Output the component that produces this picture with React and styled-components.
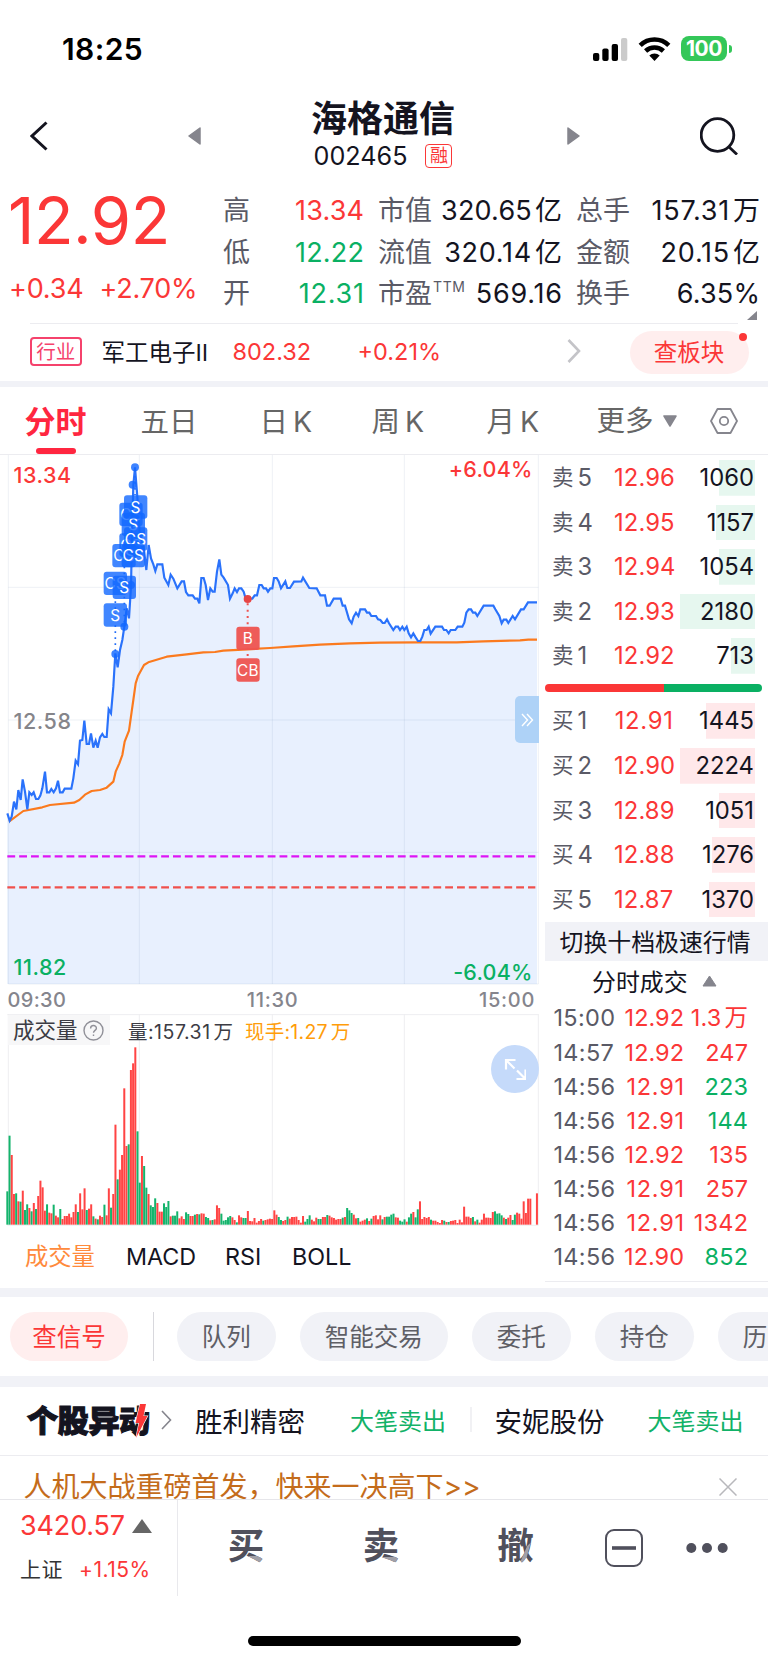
import React from 'react';
import styled, { createGlobalStyle, css } from 'styled-components';

const RED = '#fb3737';
const GREEN = '#0ab063';
const INK = '#14141f';
const GRAY = '#5a5a66';
const BAND = '#f1f2f7';

const Global = createGlobalStyle`
  * { box-sizing: border-box; }
  body {
    margin: 0;
    background: #fff;
    color: ${INK};
    font-family: Inter, 'Noto Sans CJK SC', sans-serif;
    -webkit-font-smoothing: antialiased;
  }
`;

const Page = styled.div`
  width: 768px;
  height: 1663px;
  overflow: hidden;
  display: flex;
  flex-direction: column;
  background: #fff;
  white-space: nowrap;
`;

const Band = styled.div`
  flex: none;
  height: ${(p) => p.$h}px;
  background: ${BAND};
`;

/* ---------- status bar ---------- */
const StatusBar = styled.div`
  flex: none;
  height: 96px;
  padding: 35px 36px 0 62px;
  display: flex;
  justify-content: space-between;
`;
const Clock = styled.div`
  height: 27px;
  line-height: 28px;
  font-size: 30px;
  font-weight: 600;
  color: #000;
  letter-spacing: 0.4px;
`;
const StatusIcons = styled.div`
  display: flex;
  align-items: center;
  height: 27px;
  gap: 10px;
`;
const Battery = styled.div`
  position: relative;
  width: 46px;
  height: 25px;
  margin-right: 5px;
  border-radius: 8px;
  background: #34c759;
  color: #fff;
  font-size: 21px;
  font-weight: 700;
  line-height: 25px;
  text-align: center;
  letter-spacing: -0.4px;
  &::after {
    content: '';
    position: absolute;
    left: 47.5px;
    top: 8.5px;
    width: 3px;
    height: 8px;
    border-radius: 0 3px 3px 0;
    background: #34c759;
  }
`;

/* ---------- header ---------- */
const Header = styled.div`
  flex: none;
  height: 88px;
  padding-left: 30px;
  display: grid;
  grid-template-columns: 158px 13px 366px 13px 120px 38px;
  align-items: center;
  > svg { display: block; margin-top: -8px; }
`;
const TitleBlock = styled.div`
  height: 88px;
  padding: 5px 2px 0 0;
  display: flex;
  flex-direction: column;
  align-items: center;
`;
const Title = styled.div`
  height: 37px;
  line-height: 37px;
  font-size: 36px;
  font-weight: 700;
`;
const CodeRow = styled.div`
  height: 36px;
  display: flex;
  align-items: center;
  gap: 18px;
  font-size: 25.2px;
  line-height: 36px;
`;
const MarginBadge = styled.span`
  width: 27px;
  height: 24px;
  border: 1.5px solid ${RED};
  border-radius: 4px;
  color: ${RED};
  font-size: 18px;
  line-height: 21px;
  text-align: center;
`;

/* ---------- quote ---------- */
const Quote = styled.div`
  flex: none;
  height: 139px;
  padding-left: 10px;
  display: flex;
`;
const PriceBlock = styled.div`
  width: 213px;
  color: ${RED};
`;
const BigPrice = styled.div`
  height: 73px;
  line-height: 74px;
  font-size: 65px;
  margin-left: -2px;
  letter-spacing: -0.5px;
`;
const Changes = styled.div`
  height: 62px;
  line-height: 64px;
  font-size: 27px;
  display: flex;
  gap: 16px;
  margin-left: -1px;
  letter-spacing: -0.2px;
`;
const Stats = styled.div`
  position: relative;
  padding-top: 6px;
  display: grid;
  grid-template-columns: 55px 86px 14px 70px 114px 14px 60px 124px;
  grid-auto-rows: 41.5px;
  line-height: 41.5px;
  font-size: 27px;
`;
const StatLabel = styled.span`
  color: ${GRAY};
  sup { position: absolute; font-size: 14px; line-height: 14px; margin: 7px 0 0 1px; letter-spacing: 0.6px; }
`;
const StatValue = styled.span`
  color: ${(p) => p.$c || INK};
  display: flex;
  justify-content: flex-end;
  gap: 3px;
  letter-spacing: ${(p) => p.$ls}px;
  margin-right: -${(p) => p.$ls}px;
`;
const Corner = styled.i`
  position: absolute;
  left: 524px;
  top: 127px;
  border-left: 10px solid transparent;
  border-bottom: 9px solid #85858d;
`;

/* ---------- industry ---------- */
const Industry = styled.div`
  flex: none;
  height: 57.5px;
  margin: 0 30px;
  border-top: 1px solid #ececf0;
  display: flex;
  align-items: center;
  font-size: 23.5px;
  padding-bottom: 2px;
  > * { flex: none; }
`;
const IndustryBadge = styled.span`
  width: 51.5px;
  height: 29.5px;
  border: 2px solid #f5426c;
  border-radius: 4px;
  color: #f5426c;
  font-size: 19.5px;
  line-height: 26px;
  text-align: center;
`;
const Cell = styled.span`
  width: ${(p) => p.$w}px;
  color: ${(p) => p.$c || 'inherit'};
  flex: none;
`;
const SectorPill = styled.span`
  position: relative;
  width: 119px;
  height: 43.5px;
  margin: 2px 0 0 48.5px;
  border-radius: 22px;
  background: #ffeeee;
  color: ${RED};
  line-height: 43px;
  text-align: center;
  &::after {
    content: '';
    position: absolute;
    right: 2px;
    top: 2px;
    width: 8px;
    height: 8px;
    border-radius: 50%;
    background: ${RED};
  }
`;

/* ---------- period tabs ---------- */
const Tabs = styled.div`
  flex: none;
  height: 68px;
  padding-left: 24.5px;
  display: flex;
  font-size: 28.5px;
  line-height: 70px;
  color: #666;
  border-bottom: 1px solid #ececf0;
`;
const Tab = styled.div`
  position: relative;
  flex: none;
  width: ${(p) => p.$w}px;
  word-spacing: -3px;
  ${(p) => p.$active && css`
    color: #ff2640;
    font-weight: 700;
    font-size: 31px;
    &::after {
      content: '';
      position: absolute;
      left: 11px;
      bottom: 0;
      width: 40px;
      height: 6px;
      border-radius: 3px;
      background: #ff2640;
    }
  `}
`;
const More = styled(Tab)`
  display: flex;
  align-items: center;
  gap: 9px;
`;

/* ---------- main ---------- */
const Main = styled.div`
  flex: none;
  height: 833px;
  display: flex;
`;
const Charts = styled.div`
  width: 545px;
  display: flex;
  flex-direction: column;
`;
const PriceChart = styled.div`
  position: relative;
  height: 530px;
  svg { display: block; }
`;
const ChartLabel = styled.span`
  position: absolute;
  font-size: 21.5px;
  font-weight: 500;
  line-height: 24px;
  letter-spacing: ${(p) => (p.$right ? 0.2 : 0.55)}px;
  color: ${(p) => p.$c};
  top: ${(p) => p.$top}px;
  ${(p) => (p.$right ? 'right: 12.5px;' : 'left: 13.5px;')}
`;
const SideTab = styled.div`
  position: absolute;
  left: 515px;
  top: 241px;
  width: 24px;
  height: 47px;
  border-radius: 5px 0 0 5px;
  background: #aed2f7;
  display: flex;
  align-items: center;
  justify-content: center;
`;
const TimeAxis = styled.div`
  height: 29px;
  padding: 0 10px 0 7.5px;
  display: flex;
  justify-content: space-between;
  font-size: 20px;
  font-weight: 500;
  line-height: 31px;
  color: #85858d;
  letter-spacing: 0.35px;
  span + span { letter-spacing: 0.7px; }
`;
const VolumeChart = styled.div`
  position: relative;
  height: 212px;
  svg { display: block; }
`;
const VolumeHead = styled.div`
  position: absolute;
  left: 8px;
  top: 1px;
  height: 30px;
  display: flex;
  font-size: 19.5px;
  line-height: 35px;
  color: #3c3c44;
`;
const VolumeFigure = styled.span`
  width: ${(p) => p.$w}px;
  color: ${(p) => p.$c || 'inherit'};
  display: flex;
  gap: 3px;
  letter-spacing: ${(p) => p.$ls}px;
`;
const VolumeName = styled.div`
  width: 102px;
  padding-left: 5px;
  background: #f7f7f8;
  font-size: 21.5px;
  line-height: 30px;
  display: flex;
  align-items: center;
  gap: 5px;
`;
const Expand = styled.div`
  position: absolute;
  left: 491px;
  top: 31px;
  width: 48px;
  height: 48px;
  border-radius: 50%;
  background: #c5dafa;
  padding: 13px;
`;
const Indicators = styled.div`
  display: flex;
  padding-left: 25px;
  height: 62px;
  line-height: 62px;
  font-size: 23.3px;
`;

/* ---------- order book ---------- */
const Side = styled.div`
  width: 223px;
`;
const BookRow = styled.div`
  height: 44.6px;
  line-height: 45.6px;
  padding-left: 7px;
  display: grid;
  grid-template-columns: 62px 59px 7px 75px;
  align-items: center;
  font-size: 23.8px;
`;
const Level = styled.span`
  color: ${GRAY};
  display: flex;
  gap: 4px;
  b { font-weight: 400; font-size: 21.5px; }
`;
const BookPrice = styled.span`
  color: ${RED};
  text-align: right;
  letter-spacing: ${(p) => p.$ls}px;
  margin-right: -${(p) => p.$ls}px;
`;
const Depth = styled.span`
  grid-column: 4;
  height: 35.5px;
  line-height: 36.5px;
  padding-right: 1px;
  text-align: right;
  background: linear-gradient(${(p) => p.$c}, ${(p) => p.$c}) right / ${(p) => p.$w}px 100% no-repeat;
`;
const Ratio = styled.div`
  height: 20.4px;
  padding: 6px 6px 6px 0;
  display: flex;
  &::before, &::after { content: ''; height: 8px; }
  &::before { width: 118.5px; background: ${RED}; border-radius: 4px 0 0 4px; }
  &::after { flex: 1; background: ${GREEN}; border-radius: 0 4px 4px 0; }
`;
const Switch = styled.div`
  height: 39.5px;
  line-height: 41px;
  margin-top: 0.6px;
  padding-left: 14.5px;
  background: ${BAND};
  font-size: 23.9px;
`;
const TradesTitle = styled.div`
  height: 38.5px;
  padding-left: 47px;
  margin-bottom: 1.5px;
  display: flex;
  align-items: center;
  gap: 14.5px;
  font-size: 23.9px;
`;
const Trade = styled.div`
  height: 34.15px;
  line-height: 34.15px;
  padding-left: 8.5px;
  display: grid;
  grid-template-columns: 62px 68.5px 64px;
  font-size: 23.5px;
  color: ${GRAY};
  letter-spacing: 0.3px;
`;
const TradeFigure = styled.span`
  display: flex;
  justify-content: flex-end;
  gap: 3px;
  color: ${(p) => p.$c};
  letter-spacing: ${(p) => p.$ls}px;
  margin-right: -${(p) => p.$ls}px;
`;
const SideEnd = styled.div`
  margin-top: 6px;
  border-top: 1px solid #ececf0;
`;

/* ---------- chips ---------- */
const Chips = styled.div`
  flex: none;
  height: 79px;
  padding-left: 10px;
  display: flex;
  align-items: center;
  gap: 24.5px;
  overflow: hidden;
`;
const Chip = styled.div`
  flex: none;
  height: 49px;
  line-height: 50px;
  padding: 0 ${(p) => (p.$hot ? 22.25 : 24.75)}px;
  border-radius: 25px;
  font-size: 24.5px;
  color: ${(p) => (p.$hot ? RED : '#5f5f66')};
  background: ${(p) => (p.$hot ? '#ffeeee' : BAND)};
`;
const Rule = styled.i`
  flex: none;
  width: 1.5px;
  height: ${(p) => p.$h}px;
  background: ${(p) => p.$c};
  margin-right: ${(p) => p.$mr}px;
`;

/* ---------- movers ---------- */
const Movers = styled.div`
  flex: none;
  height: 69px;
  padding: 0 0 3px 27px;
  display: flex;
  align-items: center;
  border-bottom: 1px solid #ececf0;
  font-size: 27.5px;
`;
const Logo = styled.div`
  position: relative;
  width: 134px;
  font-size: 31px;
  font-weight: 900;
  line-height: 40px;
  padding-top: 2px;
  -webkit-text-stroke: 1.2px ${INK};
  letter-spacing: -0.3px;
  svg { position: absolute; left: 108px; top: 4px; overflow: visible; }
`;
const Event = styled.span`
  width: ${(p) => p.$w}px;
  font-size: 24px;
  color: #12b268;
`;

/* ---------- notice ---------- */
const Notice = styled.div`
  flex: none;
  height: 42.5px;
  padding: 0 31px 0 23.5px;
  display: flex;
  justify-content: space-between;
  align-items: flex-start;
  overflow: hidden;
  font-size: 28px;
  line-height: 62px;
  color: #c46c1b;
  svg { margin-top: 22px; }
`;

/* ---------- bottom ---------- */
const Bottom = styled.div`
  flex: none;
  height: 97px;
  border-top: 1px solid #e6e6ea;
  display: flex;
`;
const IndexBox = styled.div`
  width: 178px;
  padding: 6px 0 0 20px;
  border-right: 1px solid #e9e9ed;
  color: ${RED};
`;
const IndexRow = styled.div`
  display: flex;
  align-items: center;
  height: ${(p) => p.$h}px;
  line-height: ${(p) => p.$h}px;
  font-size: ${(p) => p.$fs}px;
  gap: ${(p) => p.$gap}px;
  letter-spacing: ${(p) => p.$ls}px;
`;
const Action = styled.div`
  width: ${(p) => p.$w}px;
  display: flex;
  align-items: center;
  justify-content: center;
`;
const Glyph = styled.span`
  position: relative;
  font-size: 36.5px;
  font-weight: 700;
  line-height: 44px;
  margin-top: -3px;
  color: #50505c;
  &::after {
    content: '${(p) => p.$t}';
    position: absolute;
    left: 0;
    top: 0;
    color: #a0a0a8;
    clip-path: polygon(${(p) => p.$clip});
  }
`;
const HomeArea = styled.div`
  flex: 1;
  display: flex;
  justify-content: center;
  padding-top: 40.5px;
  &::after {
    content: '';
    width: 273px;
    height: 10px;
    border-radius: 5px;
    background: #000;
  }
`;

/* ---------- data (chart coordinates are in thirds of a pixel) ---------- */
const PRICE =
  '22,1090 29,1112 35,1100 42,1055 49,1078 55,1020 62,1050 68,988 75,1025 82,1078 88,1027 95,1035 101,1027 108,1047 115,1047 121,1037 127,1015 135,965 141,1027 148,1027 154,1017 161,1027 168,1015 174,992 180,1027 188,1027 194,1016 214,1016 220,985 227,932 234,943 240,872 247,870 253,812 260,882 267,882 273,850 280,893 287,872 293,893 300,862 307,852 313,861 320,861 326,778 333,790 340,710 346,610 353,652 360,600 367,570 373,530 380,475 387,505 393,410 396,250 400,105 405,52 412,140 420,260 432,300 439,360 446,285 453,325 460,343 466,363 472,343 487,343 493,383 505,405 512,374 520,386 532,415 545,394 552,394 558,426 565,436 578,436 585,446 592,446 598,460 604,384 611,384 617,405 624,450 631,415 638,425 644,425 651,365 658,328 664,374 671,383 684,405 690,446 698,430 704,415 711,426 717,415 724,415 731,425 737,446 757,446 764,436 771,436 778,405 785,405 791,415 798,415 804,425 811,415 817,415 822,384 830,384 836,394 843,415 856,394 862,414 870,414 882,395 904,394 909,383 928,414 950,415 961,436 975,436 981,467 989,467 1001,446 1022,446 1028,467 1035,467 1047,508 1055,520 1061,500 1068,488 1075,498 1081,478 1095,478 1101,488 1108,488 1114,498 1128,498 1134,508 1141,510 1148,519 1154,519 1161,508 1167,520 1180,540 1187,530 1194,530 1200,540 1207,530 1213,540 1220,530 1226,550 1233,562 1240,550 1247,562 1254,573 1261,573 1267,560 1273,540 1280,540 1286,530 1292,551 1306,530 1326,530 1332,540 1339,540 1346,550 1352,540 1366,540 1373,530 1387,530 1393,518 1399,488 1406,478 1413,478 1419,488 1426,488 1432,498 1451,467 1480,467 1486,478 1498,498 1505,520 1511,509 1519,509 1525,519 1538,498 1545,508 1563,478 1571,478 1584,457 1611,457';

const AVERAGE =
  '27,1115 70,1083 127,1072 150,1065 222,1058 238,1050 255,1034 275,1023 300,1020 320,1013 340,995 347,965 358,940 367,915 374,875 387,842 395,785 400,750 407,700 414,678 432,645 445,637 500,620 560,613 610,607 645,606 670,602 743,598 810,594 880,589 960,584 1050,580 1140,578 1250,577 1370,577 1450,574 1560,571 1585,569 1611,569';

const VOLUME = (
  'g100 g267 r209 r92 g94 r70 g69 r102 g44 g61 r50 g40 r65 g47 r86 r132 r112 r42 g61 r36 r34 g60 r27 r22 g47 r17 r26 r26 r33 r22 ' +
  'r38 r61 g38 r94 r46 r109 g44 r48 r61 g25 r18 g16 r27 r23 g60 r28 r109 g51 r92 r300 g136 r165 r209 r409 r236 g241 r464 r484 r532 g280 ' +
  'g126 r206 g176 g111 r92 g58 g53 g79 r65 r39 r39 g64 g53 g71 r25 g27 g27 g40 r19 r25 r17 g37 g32 r26 r26 g30 r32 g31 r34 r33 ' +
  'g23 g20 r13 g14 r16 r58 r50 g33 g12 g14 g22 g26 r22 r14 g7 r28 r22 g20 g20 r41 r11 r10 r20 r6 r11 r17 g12 r14 r16 r18 ' +
  'r17 r43 r30 g23 g14 r11 r14 g24 r18 r23 r23 r24 r14 r6 r26 g9 g17 g28 r15 r10 r21 g17 g17 r23 r23 g29 r27 r22 r20 r15 ' +
  'r17 r17 g21 r23 g50 g43 g35 r30 r19 g20 r9 r12 r15 g19 r11 g18 r26 r28 r16 r28 g16 r23 g24 g24 g30 g33 r22 r21 g12 g9 ' +
  'g16 r9 g22 g33 r38 g22 g46 r70 r17 r23 r20 r23 g15 r12 r12 r8 r5 r14 g12 r8 g8 r11 r12 r14 r5 r15 r7 r54 r24 r24 ' +
  'r20 g23 r10 g15 r6 r15 r33 r21 r21 r20 r38 g40 g33 g34 g28 r21 g17 r21 r29 g14 g30 r36 r33 r18 r70 r35 r78 r78 r0 r0 r94'
).split(' ').map((v) => ({ up: v[0] === 'r', h: Number(v.slice(1)) }));

const FLAGS = [
  ['CS', 358, 158], ['S', 365, 188], ['S', 372, 136], ['CS', 358, 250], ['CS', 372, 232],
  ['CS', 337, 282], ['CS', 365, 282], ['CS', 311, 365], ['S', 338, 377], ['S', 311, 460],
  ['B', 709, 530], ['CB', 709, 625],
];
const GRID_X = [25, 418, 817, 1213, 1615];

const SELLS = [['5', '12.96', '1060', 36], ['4', '12.95', '1157', 39.5], ['3', '12.94', '1054', 36], ['2', '12.93', '2180', 75], ['1', '12.92', '713', 24.5]];
const BUYS = [['1', '12.91', '1445', 49], ['2', '12.90', '2224', 75], ['3', '12.89', '1051', 36], ['4', '12.88', '1276', 43], ['5', '12.87', '1370', 46]];
const TRADES = [
  ['15:00', '12.92', '1.3', 1, '万'], ['14:57', '12.92', '247', 1], ['14:56', '12.91', '223', 0], ['14:56', '12.91', '144', 0],
  ['14:56', '12.92', '135', 1], ['14:56', '12.91', '257', 1], ['14:56', '12.91', '1342', 1], ['14:56', '12.90', '852', 0],
];

/* Digits after the point that include a narrow "1" get looser tracking. */
const tracking = (value, tight, loose) => (/\..*1/.test(value) ? loose : tight);

function Stat({ label, sup, value, unit, color }) {
  return (
    <>
      <StatLabel>{label}{sup && <sup>{sup}</sup>}</StatLabel>
      <StatValue $c={color} $ls={tracking(value, 0.2, 0.75)}>
        <span>{value}</span>{unit && <span>{unit}</span>}
      </StatValue>
    </>
  );
}

function Flag({ text, x, y }) {
  const buy = text.includes('B');
  return (
    <g>
      <rect x={x} y={y} width="70" height="70" rx="9" fill={buy ? '#ee5350' : '#1268ff'} fillOpacity={buy ? 0.95 : 0.8} />
      <text x={x + 35} y={y + 52} textAnchor="middle" fontSize="46" fill="#fff" letterSpacing="1">{text}</text>
    </g>
  );
}

function PriceSvg() {
  return (
    <svg width="540" height="530" viewBox="0 15 1620 1590">
      <polygon points={`${PRICE} 1611,1602 22,1602`} fill="#e8f0fe" />
      <g stroke="#2b4a80" strokeOpacity="0.08" strokeWidth="3">
        {GRID_X.map((x) => <line key={x} x1={x} x2={x} y1="15" y2="1602" />)}
        {[412, 810, 1207, 1602].map((y) => <line key={y} x1="25" x2="1615" y1={y} y2={y} />)}
      </g>
      <g strokeWidth="7" strokeDasharray="23.5 12">
        <line x1="22" x2="1606" y1="1219" y2="1219" stroke="#dd14f5" />
        <line x1="22" x2="1606" y1="1312" y2="1312" stroke="#f0504c" />
      </g>
      <polyline points={AVERAGE} fill="none" stroke="#fb7a1e" strokeWidth="6.5" strokeLinejoin="round" />
      <polyline points={PRICE} fill="none" stroke="#2a72fb" strokeWidth="6.5" />
      <g strokeWidth="5" strokeDasharray="5 13" stroke="#1f6bf8">
        <line x1="346" x2="346" y1="454" y2="610" />
        <line x1="373" x2="373" y1="350" y2="525" />
        <line x1="405" x2="405" y1="60" y2="135" />
      </g>
      <line x1="743" x2="743" y1="460" y2="625" stroke="#ee5350" strokeWidth="6" strokeDasharray="6 13" />
      {[[405, 52], [398, 104], [393, 405], [373, 530], [346, 612]].map(([x, y]) => (
        <circle key={y} cx={x} cy={y} r="12" fill="#1268ff" fillOpacity="0.82" />
      ))}
      <circle cx="743" cy="447" r="12" fill="#e64545" />
      {FLAGS.map(([t, x, y]) => <Flag key={`${x}-${y}`} text={t} x={x} y={y} />)}
    </svg>
  );
}

function VolumeSvg() {
  return (
    <svg width="540" height="212" viewBox="0 0 1620 636">
      <g stroke="#eeeef1" strokeWidth="3">
        {GRID_X.map((x) => <line key={x} x1={x} x2={x} y1="0" y2="634" />)}
        <line x1="22" x2="1615" y1="2" y2="2" />
        <line x1="22" x2="1615" y1="634" y2="634" />
      </g>
      {VOLUME.map((b, i) => (
        <rect key={i} x={19 + i * 6.62} y={632 - b.h} width="6" height={b.h} fill={b.up ? '#ff4444' : '#14b46c'} />
      ))}
    </svg>
  );
}

function Book({ side, rows, tint }) {
  return rows.map(([n, price, vol, w]) => (
    <BookRow key={n}>
      <Level><b>{side}</b>{n}</Level>
      <BookPrice $ls={tracking(price, 0.1, 0.75)}>{price}</BookPrice>
      <Depth $w={w} $c={tint}>{vol}</Depth>
    </BookRow>
  ));
}

export default function App() {
  return (
    <Page>
      <Global />
      <StatusBar>
        <Clock>18:25</Clock>
        <StatusIcons>
          <svg width="35" height="24" viewBox="0 0 35 24">
            <rect x="0" y="16" width="6.3" height="8" rx="2" />
            <rect x="9.3" y="11.5" width="6.3" height="12.5" rx="2" />
            <rect x="18.7" y="7" width="6.3" height="17" rx="2" />
            <rect x="28" y="1" width="6.3" height="23" rx="2" fill="#cbcbcb" />
          </svg>
          <svg width="33" height="24" viewBox="0 0 33 24">
            <g fill="none" stroke="#000" strokeWidth="4.6">
              <path d="M2.2 8.3 A20.5 20.5 0 0 1 30.8 8.3" />
              <path d="M7.6 14 A13 13 0 0 1 25.4 14" />
            </g>
            <path d="M16.5 24 L11.3 18.6 A7.6 7.6 0 0 1 21.7 18.6 Z" />
          </svg>
          <Battery>100</Battery>
        </StatusIcons>
      </StatusBar>

      <Header>
        <svg width="18" height="30" viewBox="0 0 18 30"><path d="M16.5 1.5 L2 15 L16.5 28.5" fill="none" stroke={INK} strokeWidth="3" /></svg>
        <svg width="13" height="18" viewBox="0 0 13 18"><path d="M12 1 V17 L1 9 Z" fill="#85858d" stroke="#85858d" strokeLinejoin="round" strokeWidth="1.5" /></svg>
        <TitleBlock>
          <Title>海格通信</Title>
          <CodeRow>002465<MarginBadge>融</MarginBadge></CodeRow>
        </TitleBlock>
        <svg width="13" height="18" viewBox="0 0 13 18"><path d="M1 1 V17 L12 9 Z" fill="#85858d" stroke="#85858d" strokeLinejoin="round" strokeWidth="1.5" /></svg>
        <i />
        <svg width="38" height="38" viewBox="0 0 38 38" fill="none" stroke={INK} strokeWidth="2.8">
          <circle cx="17.5" cy="18" r="16.3" /><path d="M28.5 29.5 L37 37.5" />
        </svg>
      </Header>

      <Quote>
        <PriceBlock>
          <BigPrice>12.92</BigPrice>
          <Changes><span>+0.34</span><span>+2.70%</span></Changes>
        </PriceBlock>
        <Stats>
          <Stat label="高" value="13.34" color={RED} /><i />
          <Stat label="市值" value="320.65" unit="亿" /><i />
          <Stat label="总手" value="157.31" unit="万" />
          <Stat label="低" value="12.22" color={GREEN} /><i />
          <Stat label="流值" value="320.14" unit="亿" /><i />
          <Stat label="金额" value="20.15" unit="亿" />
          <Stat label="开" value="12.31" color={GREEN} /><i />
          <Stat label="市盈" sup="TTM" value="569.16" /><i />
          <Stat label="换手" value="6.35%" />
          <Corner />
        </Stats>
      </Quote>

      <Industry>
        <IndustryBadge>行业</IndustryBadge>
        <Cell $w={20} />
        <Cell $w={131}>军工电子Ⅱ</Cell>
        <Cell $w={125} $c={RED}>802.32</Cell>
        <Cell $w={209.5} $c={RED}>+0.21%</Cell>
        <svg width="14" height="24" viewBox="0 0 14 24"><path d="M1.5 1 L12 12 L1.5 23" fill="none" stroke="#c4c4c8" strokeWidth="2.6" /></svg>
        <SectorPill>查板块</SectorPill>
      </Industry>
      <Band $h={6.5} />

      <Tabs>
        <Tab $active $w={116}>分时</Tab>
        <Tab $w={119}>五日</Tab>
        <Tab $w={112}>日 K</Tab>
        <Tab $w={115}>周 K</Tab>
        <Tab $w={110}>月 K</Tab>
        <More $w={113}>更多<svg width="14" height="12" viewBox="0 0 14 12"><path d="M1 1 H13 L7 11 Z" fill="#85858d" stroke="#85858d" strokeLinejoin="round" strokeWidth="1.5" /></svg></More>
        <More $w={30}>
          <svg width="28" height="26" viewBox="0 0 28 26" fill="none" stroke="#85858d" strokeWidth="1.8">
            <path d="M7.5 1 H20.5 L27 13 L20.5 25 H7.5 L1 13 Z" strokeLinejoin="round" /><circle cx="14" cy="13" r="4.2" />
          </svg>
        </More>
      </Tabs>

      <Main>
        <Charts>
          <PriceChart>
            <PriceSvg />
            <ChartLabel $c={RED} $top={7.5}>13.34</ChartLabel>
            <ChartLabel $c={RED} $top={1.5} $right>+6.04%</ChartLabel>
            <ChartLabel $c="#85858a" $top={253.5}>12.58</ChartLabel>
            <ChartLabel $c={GREEN} $top={499.5}>11.82</ChartLabel>
            <ChartLabel $c={GREEN} $top={505} $right>-6.04%</ChartLabel>
            <SideTab>
              <svg width="13" height="14" viewBox="0 0 13 14" fill="none" stroke="#fff" strokeWidth="1.4"><path d="M1 1 L6.5 7 L1 13 M6 1 L11.5 7 L6 13" /></svg>
            </SideTab>
          </PriceChart>
          <TimeAxis><span>09:30</span><span>11:30</span><span>15:00</span></TimeAxis>
          <VolumeChart>
            <VolumeSvg />
            <VolumeHead>
              <VolumeName>成交量
                <svg width="21" height="21" viewBox="0 0 21 21" fill="none" stroke="#909098" strokeWidth="1.4">
                  <circle cx="10.5" cy="10.5" r="9.5" />
                  <path d="M7.6 8.4 C7.6 4.6 13.4 4.6 13.4 8.2 C13.4 10.4 10.5 10.4 10.5 12.8 M10.5 14.4 V16" />
                </svg>
              </VolumeName>
              <Cell $w={18} />
              <VolumeFigure $w={117} $ls={0.5}><span>量:157.31</span><span>万</span></VolumeFigure>
              <VolumeFigure $w={110} $ls={0.25} $c="#ff9d0a"><span>现手:1.27</span><span>万</span></VolumeFigure>
            </VolumeHead>
            <Expand>
              <svg width="22" height="22" viewBox="0 0 22 22" fill="none" stroke="#fff" strokeWidth="2.2">
                <path d="M11.5 2 H2 V11.5 M2 2 L10.5 10.5 M12.5 21 H21.5 V11.5 M21.5 21 L13 12.5" />
              </svg>
            </Expand>
          </VolumeChart>
          <Indicators>
            <Cell $w={101} $c="#ff8a3c">成交量</Cell>
            <Cell $w={99}>MACD</Cell>
            <Cell $w={67}>RSI</Cell>
            <Cell $w={80}>BOLL</Cell>
          </Indicators>
        </Charts>
        <Side>
          <Book side="卖" rows={SELLS} tint="#e6f7ef" />
          <Ratio />
          <Book side="买" rows={BUYS} tint="#ffe8ea" />
          <Switch>切换十档极速行情</Switch>
          <TradesTitle>分时成交<svg width="15" height="12" viewBox="0 0 15 12"><path d="M1 11 H14 L7.5 1 Z" fill="#85858d" stroke="#85858d" strokeLinejoin="round" /></svg></TradesTitle>
          {TRADES.map(([t, p, v, up, unit], i) => (
            <Trade key={i}>
              <span>{t}</span>
              <TradeFigure $c={RED} $ls={tracking(p, 0, 0.7)}>{p}</TradeFigure>
              <TradeFigure $c={up ? RED : GREEN} $ls={0.2}><span>{v}</span>{unit && <span>{unit}</span>}</TradeFigure>
            </Trade>
          ))}
          <SideEnd />
        </Side>
      </Main>
      <Band $h={9} />

      <Chips>
        <Chip $hot>查信号</Chip>
        <Rule $h={49} $c="#d8d8dd" $mr={-1.5} />
        <Chip>队列</Chip>
        <Chip>智能交易</Chip>
        <Chip>委托</Chip>
        <Chip>持仓</Chip>
        <Chip>历史</Chip>
      </Chips>
      <Band $h={11} />

      <Movers>
        <Logo>
          个股异动
          <svg width="13" height="36" viewBox="0 0 13 36"><path d="M5 1 H11 L8.5 13 H12.5 L1 35 L4 20 H0.5 Z" fill={RED} stroke="#fff" strokeWidth="1.2" paintOrder="stroke" /></svg>
        </Logo>
        <Cell $w={34}>
          <svg width="11" height="20" viewBox="0 0 11 20"><path d="M1 1 L9.5 10 L1 19" fill="none" stroke="#85858d" strokeWidth="1.6" /></svg>
        </Cell>
        <Cell $w={155}>胜利精密</Cell>
        <Event $w={120}>大笔卖出</Event>
        <Rule $h={25} $c="#f1f1f4" $mr={23} />
        <Cell $w={153}>安妮股份</Cell>
        <Event $w={100}>大笔卖出</Event>
      </Movers>

      <Notice>
        人机大战重磅首发，快来一决高下&gt;&gt;
        <svg width="18" height="18" viewBox="0 0 18 18"><path d="M0.5 0.5 L17.5 17.5 M17.5 0.5 L0.5 17.5" stroke="#b8b8bc" strokeWidth="1.5" /></svg>
      </Notice>

      <Bottom>
        <IndexBox>
          <IndexRow $h={40} $fs={27} $gap={7} $ls={-0.15}>
            3420.57
            <svg width="20" height="14" viewBox="0 0 20 14"><path d="M0 14 H20 L10 0 Z" fill="#666" /></svg>
          </IndexRow>
          <IndexRow $h={48} $fs={21} $gap={16} $ls={0.5}><Cell $c="#333">上证</Cell>+1.15%</IndexRow>
        </IndexBox>
        <Action $w={136}><Glyph $t="买" $clip="55% 73%, 100% 73%, 100% 100%, 55% 100%">买</Glyph></Action>
        <Action $w={134}><Glyph $t="卖" $clip="55% 75%, 100% 75%, 100% 100%, 55% 100%">卖</Glyph></Action>
        <Action $w={135}><Glyph $t="撤" $clip="82% 50%, 92% 42%, 80% 78%, 68% 92%, 62% 88%">撤</Glyph></Action>
        <Action $w={82}>
          <svg width="38" height="38" viewBox="0 0 38 38" fill="none" stroke="#50505c"><rect x="1" y="1" width="36" height="36" rx="8" strokeWidth="2" /><path d="M7 19 H31" strokeWidth="3.6" /></svg>
        </Action>
        <Action $w={84}>
          <svg width="42" height="12" viewBox="0 0 42 12" fill="#50505c"><circle cx="5.3" cy="6" r="5" /><circle cx="21" cy="6" r="5" /><circle cx="36.7" cy="6" r="5" /></svg>
        </Action>
      </Bottom>
      <HomeArea />
    </Page>
  );
}
